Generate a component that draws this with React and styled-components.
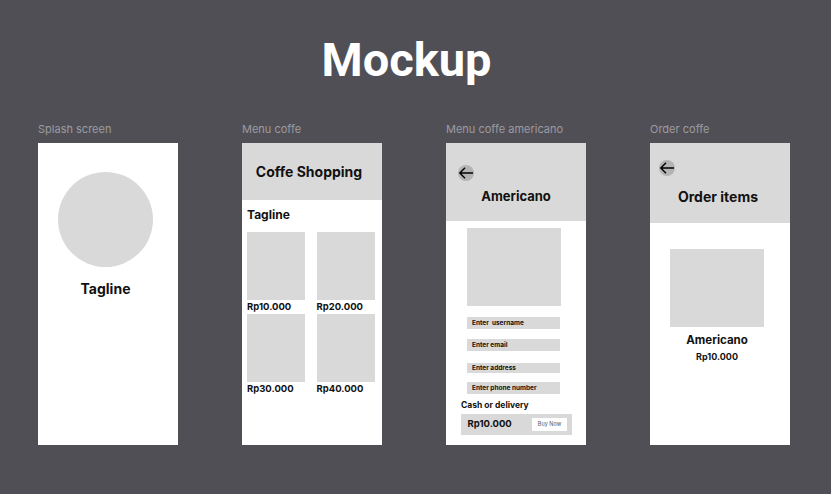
import React from "react";
import styled, { createGlobalStyle } from "styled-components";

const GlobalStyle = createGlobalStyle`
  html, body {
    margin: 0;
    padding: 0;
    background: #504f55;
    font-family: "Inter", "Liberation Sans", sans-serif;
  }
`;

const Page = styled.div`
  width: 831px;
  height: 494px;
  display: flex;
  flex-direction: column;
  align-items: center;
  overflow: hidden;
`;

const Title = styled.h1`
  margin: 32px 0 0;
  padding-right: 18px;
  font-family: "Roboto", "Inter", sans-serif;
  font-size: 47px;
  line-height: 56px;
  font-weight: 700;
  color: #fff;
`;

const Board = styled.div`
  align-self: stretch;
  display: flex;
  gap: 64px;
  padding-left: 38px;
  margin-top: 34px;
`;

const Column = styled.div`
  display: flex;
  flex-direction: column;
  width: 140px;
`;

const Label = styled.div`
  font-size: 11px;
  line-height: 14px;
  color: #9c9ba1;
  margin-bottom: 7px;
`;

const Frame = styled.div`
  height: 302px;
  background: #fff;
  display: flex;
  flex-direction: column;
`;

const Header = styled.div`
  height: ${(p) => p.$h}px;
  background: #d9d9d9;
  display: flex;
  flex-direction: column;
  justify-content: ${(p) => (p.$center ? "center" : "flex-start")};
  padding: ${(p) => p.$pad || "0"};
  box-sizing: border-box;
  flex-shrink: 0;
`;

const Heading = styled.div`
  font-size: ${(p) => p.$size}px;
  line-height: ${(p) => p.$size + 3}px;
  font-weight: 700;
  color: #111;
  text-align: center;
  margin-top: ${(p) => p.$mt || 0}px;
  padding-right: ${(p) => p.$pr || 0}px;
`;

/* splash */
const SplashBody = styled.div`
  display: flex;
  flex-direction: column;
  align-items: center;
  padding: 29px 5px 0 0;
`;

const Circle = styled.div`
  width: 95px;
  height: 95px;
  border-radius: 50%;
  background: #d9d9d9;
`;

/* menu */
const MenuBody = styled.div`
  padding: 0 6px 0 5px;
`;

const SubTitle = styled.div`
  font-size: 12px;
  line-height: 15px;
  font-weight: 700;
  color: #111;
  margin: 7px 0 10px;
`;

const Grid = styled.div`
  display: grid;
  grid-template-columns: 58px 58px;
  column-gap: 11.5px;
`;

const Product = styled.div`
  display: flex;
  flex-direction: column;
`;

const Thumb = styled.div`
  width: ${(p) => p.$w || 58}px;
  height: ${(p) => p.$h || 68}px;
  background: #d9d9d9;
  margin-top: ${(p) => p.$mt || 0}px;
  margin-left: ${(p) => p.$ml || 0}px;
  flex-shrink: 0;
`;

const Price = styled.div`
  font-size: ${(p) => p.$size || 9.5}px;
  line-height: ${(p) => p.$lh || 14}px;
  font-weight: 700;
  color: #111;
  margin-top: ${(p) => p.$mt || 0}px;
`;

/* detail */
const DetailBody = styled.div`
  display: flex;
  flex-direction: column;
  align-items: flex-start;
  padding: 0 14px 0 15px;
`;

const Field = styled.div`
  width: 93px;
  height: ${(p) => p.$h}px;
  margin: ${(p) => p.$mt}px 0 0 6px;
  background: #d9d9d9;
  box-sizing: border-box;
  padding-left: 5px;
  display: flex;
  align-items: center;
  font-size: 6.5px;
  font-weight: 700;
  color: #111;
  white-space: pre;
`;

const Small = styled.div`
  font-size: 8.5px;
  line-height: 11px;
  font-weight: 700;
  color: #111;
  margin: 6px 0 3px;
`;

const Bar = styled.div`
  align-self: stretch;
  height: 21px;
  background: #d9d9d9;
  display: flex;
  align-items: center;
  justify-content: space-between;
  padding: 0 5px 0 6.5px;
`;

const BuyButton = styled.button`
  width: 35px;
  height: 13px;
  border: none;
  padding: 0;
  background: #fff;
  font-family: inherit;
  font-size: 5.5px;
  color: #555;
`;

/* order */
const OrderBody = styled.div`
  display: flex;
  flex-direction: column;
  align-items: center;
  padding-right: 6px;
`;

const BackIcon = () => (
  <svg width="16" height="16" viewBox="0 0 16 16">
    <circle cx="8" cy="8" r="8" fill="#b4b4b4" />
    <path d="M15 8H1.8M7 2.7L1.8 8L7 13.3" fill="none" stroke="#000" strokeWidth="1.4" />
  </svg>
);

const fields = [
  { text: "Enter  username", h: 12.7, mt: 10.6 },
  { text: "Enter email", h: 12.7, mt: 9.3 },
  { text: "Enter address", h: 9.7, mt: 12 },
  { text: "Enter phone number", h: 12, mt: 9 },
];

const App = () => {
  const prices = ["Rp10.000", "Rp20.000", "Rp30.000", "Rp40.000"];
  return (
    <Page>
      <GlobalStyle />
      <Title>Mockup</Title>
      <Board>
        <Column>
          <Label>Splash screen</Label>
          <Frame>
            <SplashBody>
              <Circle />
              <Heading $size={14} $mt={13}>Tagline</Heading>
            </SplashBody>
          </Frame>
        </Column>

        <Column>
          <Label>Menu coffe</Label>
          <Frame>
            <Header $h={57} $center>
              <Heading $size={14} $pr={6}>Coffe Shopping</Heading>
            </Header>
            <MenuBody>
              <SubTitle>Tagline</SubTitle>
              <Grid>
                {prices.map((p) => (
                  <Product key={p}>
                    <Thumb />
                    <Price>{p}</Price>
                  </Product>
                ))}
              </Grid>
            </MenuBody>
          </Frame>
        </Column>

        <Column>
          <Label>Menu coffe americano</Label>
          <Frame>
            <Header $h={78} $pad="22px 12px 0">
              <BackIcon />
              <Heading $size={13} $mt={7}>Americano</Heading>
            </Header>
            <DetailBody>
              <Thumb $w={94} $h={78} $mt={7} $ml={6} />
              {fields.map((f) => (
                <Field key={f.text} $h={f.h} $mt={f.mt}>{f.text}</Field>
              ))}
              <Small>Cash or delivery</Small>
              <Bar>
                <Price>Rp10.000</Price>
                <BuyButton>Buy Now</BuyButton>
              </Bar>
            </DetailBody>
          </Frame>
        </Column>

        <Column>
          <Label>Order coffe</Label>
          <Frame>
            <Header $h={80} $pad="17px 9px 0">
              <BackIcon />
              <Heading $size={14} $mt={12} $pr={4}>Order items</Heading>
            </Header>
            <OrderBody>
              <Thumb $w={94} $h={78} $mt={26} />
              <Heading $size={11.5} $mt={6}>Americano</Heading>
              <Price $size={9} $lh={11} $mt={3}>Rp10.000</Price>
            </OrderBody>
          </Frame>
        </Column>
      </Board>
    </Page>
  );
};

export default App;
